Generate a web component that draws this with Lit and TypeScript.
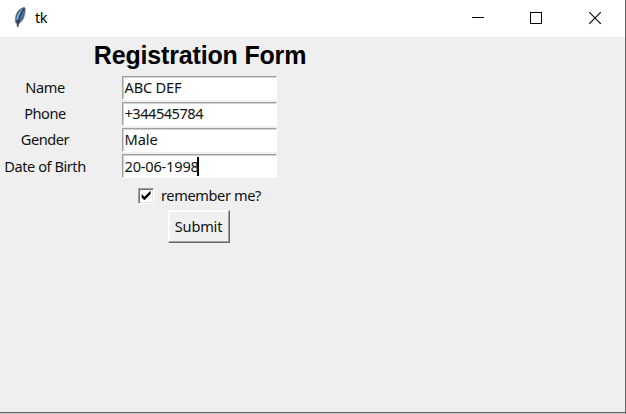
import { LitElement, html, css } from "lit";
import { customElement, property, state } from "lit/decorators.js";
import { classMap } from "lit/directives/class-map.js";

@customElement("title-bar")
class TitleBar extends LitElement {
  static styles = css`
    :host { display: flex; height: 37px; background: #fff; align-items: center; }
    .feather { width: 16px; height: 22px; margin-left: 12px; flex: none; margin-top: -3px; }
    .name { font: 14.5px/20px "Noto Sans", sans-serif; letter-spacing: -0.5px; color: #000; margin-left: 7px; margin-top: -3px; flex: 1; }
    .controls { display: flex; height: 37px; padding-right: 1px; }
    .controls svg { display: block; width: 58px; height: 37px; }
  `;
  render() {
    return html`
      <svg class="feather" viewBox="0 0 16 22">
        <path d="M12.2 1.2 L13.2 2.2 C13.4 6 12.6 10.8 10.7 13.8 L8.2 16.6 L6.5 18 L6.2 20.8 L5.4 20.8 L4.9 18 L3.4 16.2 C2.9 12.8 3.5 9.2 5.3 6.2 C7 3.5 9.7 1.7 12.2 1.2Z" fill="#3f5064" stroke="#85888c" stroke-width=".7"/>
        <path d="M11.9 2.2 C8.3 3.6 4.7 8 4.2 13 L6.2 14.8 C7 10 9 5.8 11.9 2.2Z" fill="#73a5dd"/>
        <path d="M12.4 3.4 C12.1 8.8 10.5 12.8 7.6 15.4 L8.3 10.5Z" fill="#4379b8"/>
        <path d="M11.7 3 C8.8 7 6.4 12.5 5.8 20.5" fill="none" stroke="#172332" stroke-width=".9"/>
      </svg>
      <span class="name">tk</span>
      <div class="controls">
        <svg viewBox="0 0 58 37"><path d="M22 17.5h12" stroke="#000" fill="none" shape-rendering="crispEdges"/></svg>
        <svg viewBox="0 0 58 37"><rect x="22.5" y="12.5" width="11" height="11" stroke="#000" fill="none"/></svg>
        <svg viewBox="0 0 58 37"><path d="M23.2 12.2l11.6 11.6M34.8 12.2L23.2 23.8" stroke="#000" stroke-width="1.1" fill="none"/></svg>
      </div>
    `;
  }
}

@customElement("entry-field")
class EntryField extends LitElement {
  @property() value = "";
  @property() tone = "";
  @property({ type: Boolean }) active = false;
  static styles = css`
    :host {
      box-sizing: border-box; display: flex; align-items: center; width: 155px; height: 24px; background: #fff;
      border: 1px solid; border-color: #a0a0a0 #fff #fff #a0a0a0;
      box-shadow: inset 1px 1px 0 #d2d2d2; padding-left: 2px;
    }
    span { font: 14.6px/20px "Noto Sans", sans-serif; white-space: pre; color: #111; padding-bottom: 2px; }
    .name { letter-spacing: -0.2px; }
    .phone { letter-spacing: -0.5px; }
    .gender { letter-spacing: -0.1px; }
    .birth { letter-spacing: -0.2px; padding-bottom: 0; }
    .caret { width: 2px; height: 19px; background: #000; margin-left: -2px; }
  `;
  render() {
    return html`<span class=${classMap({ [this.tone]: true })}>${this.value}</span>${this.active ? html`<i class="caret"></i>` : ""}`;
  }
}

@customElement("app-root")
class AppRoot extends LitElement {
  @state() checked = true;
  fields = [
    { label: "Name", value: "ABC DEF", tone: "name" },
    { label: "Phone", value: "+344545784", tone: "phone" },
    { label: "Gender", value: "Male", tone: "gender" },
    { label: "Date of Birth", value: "20-06-1998", tone: "birth" },
  ];
  static styles = css`
    :host { display: block; box-sizing: border-box; width: 626px; height: 414px; background: #efefef; border-right: 1px solid #696969; border-bottom: 1px solid #c8c8c8; overflow: hidden; }
    .window { box-sizing: border-box; height: 413px; border-bottom: 1px solid #606060; }
    .form { display: grid; grid-template-columns: 90px 219px; grid-template-rows: 38px repeat(4, 26px) 31px 34px; justify-items: center; font: 14.6px/20px "Noto Sans", sans-serif; color: #111; }
    h1 { grid-column: 2; margin: 3px 0 0 1px; font: bold 25px/30px "Liberation Sans", sans-serif; letter-spacing: -0.17px; color: #000; white-space: nowrap; }
    .label { line-height: 24px; white-space: nowrap; letter-spacing: -0.45px; }
    .label.current { line-height: 26px; }
    entry-field { margin: 1px 1px 0 0; }
    .remember { grid-column: 2; display: flex; align-items: center; gap: 7px; padding-top: 2px; letter-spacing: -0.4px; }
    .caption { padding-bottom: 2px; }
    .box { box-sizing: border-box; width: 16px; height: 16px; background: #fff; border: 1px solid; border-color: #a0a0a0 #fff #fff #a0a0a0; box-shadow: inset 1px 1px 0 #707070, inset -1px -1px 0 #e6e6e6; }
    .box svg { display: block; width: 14px; height: 14px; }
    .submit { grid-column: 2; box-sizing: border-box; width: 62px; height: 33px; margin: 0 2px 0 0; padding: 0 0 2px; background: #f0f0f0; border: 1px solid; border-color: #fff #696969 #696969 #fff; box-shadow: inset -1px -1px 0 #a0a0a0, inset 1px 1px 0 #fafafa; font: inherit; color: #111; letter-spacing: -0.2px; }
  `;
  render() {
    return html`
      <div class="window">
        <title-bar></title-bar>
        <div class="form">
          <h1>Registration Form</h1>
          ${this.fields.map((f, i) => html`
            <span class=${classMap({ label: true, current: i === 3 })}>${f.label}</span>
            <entry-field .value=${f.value} .tone=${f.tone} .active=${i === 3}></entry-field>
          `)}
          <div class="remember">
            <span class="box" @click=${() => (this.checked = !this.checked)}>
              ${this.checked ? html`<svg viewBox="0 0 14 14"><path d="M2.6 5v3.4l2.8 2.8 6.2-6.2V1.8L5.4 7.8z" fill="#000"/></svg>` : ""}
            </span>
            <span class="caption">remember me?</span>
          </div>
          <button class="submit">Submit</button>
        </div>
      </div>
    `;
  }
}
